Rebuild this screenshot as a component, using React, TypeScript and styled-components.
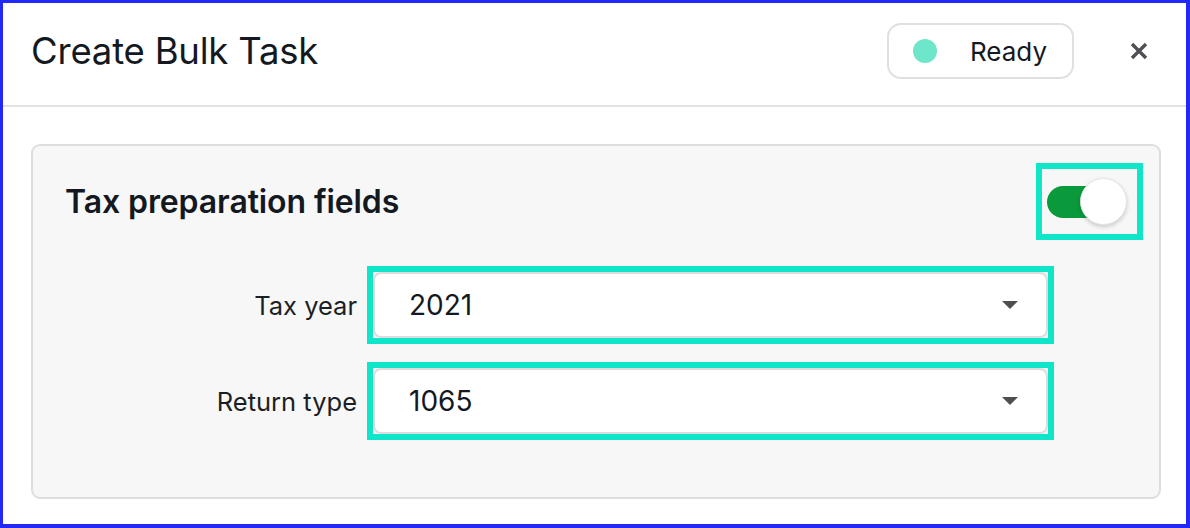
import { useState, Fragment } from "react"
import styled, { createGlobalStyle } from "styled-components"

const GlobalStyle = createGlobalStyle`
	html, body {
		margin: 0;
		padding: 0;
		background: #ffffff;
	}
	* {
		box-sizing: border-box;
	}
	body {
		font-family: Inter, "Noto Sans", "Liberation Sans", sans-serif;
		color: #14191f;
	}
`

const Frame = styled.div`
	width: 1190px;
	height: 528px;
	border-style: solid;
	border-color: #2228f5;
	border-width: 3px 4px 4px 3px;
	background: #ffffff;
	display: flex;
	flex-direction: column;
`

const Header = styled.header`
	height: 104px;
	flex-shrink: 0;
	display: flex;
	align-items: center;
	padding: 0 37px 6px 28px;
	border-bottom: 2px solid #e2e2e2;
`

const Title = styled.h1`
	margin: 0;
	flex: 1;
	font-size: 36.5px;
	font-weight: 400;
	letter-spacing: -0.2px;
	color: #14191f;
`

const StatusPill = styled.div`
	display: flex;
	align-items: center;
	height: 56px;
	padding: 0 25px 0 24px;
	border: 2px solid #e0e0e0;
	border-radius: 14px;
	gap: 33px;
	font-size: 26px;
	color: #14191f;
`

const Dot = styled.span<{ $color: string }>`
	width: 24px;
	height: 24px;
	border-radius: 50%;
	background: ${(p) => p.$color};
`

const CloseButton = styled.button`
	margin-left: 55px;
	width: 20px;
	height: 20px;
	padding: 0;
	border: none;
	background: transparent;
	display: flex;
	align-items: center;
	justify-content: center;
	cursor: pointer;
`

const Body = styled.main`
	flex: 1;
	padding: 37px 25px 25px 28px;
	display: flex;
`

const Panel = styled.section`
	flex: 1;
	background: #f7f7f7;
	border: 2px solid #dedede;
	border-radius: 9px;
	padding: 17px 16px 0 32px;
`

const PanelHeader = styled.div`
	display: flex;
	align-items: center;
	justify-content: space-between;
`

const PanelTitle = styled.h2`
	margin: 0;
	font-size: 32px;
	font-weight: 600;
	letter-spacing: -0.1px;
	color: #14191f;
`

const Highlight = styled.div`
	border: 6px solid #0fe5c9;
`

const ToggleBox = styled(Highlight)`
	width: 107px;
	height: 77px;
	display: flex;
	align-items: center;
	padding-left: 5px;
`

const Track = styled.button<{ $on: boolean }>`
	position: relative;
	width: 64px;
	height: 32px;
	border: none;
	padding: 0;
	border-radius: 16px;
	background: ${(p) => (p.$on ? "#0a9a3c" : "#c9c9c9")};
	cursor: pointer;
`

const Knob = styled.span<{ $on: boolean }>`
	position: absolute;
	top: 50%;
	left: ${(p) => (p.$on ? "33px" : "-4px")};
	width: 47px;
	height: 47px;
	margin-top: -23.5px;
	border-radius: 50%;
	background: #ffffff;
	border: 1px solid #e4e4e4;
	box-shadow: 0 2px 4px rgba(0, 0, 0, 0.18);
`

const Fields = styled.div`
	display: grid;
	grid-template-columns: 292px 687px;
	column-gap: 10px;
	row-gap: 18px;
	margin-top: 26px;
	align-items: center;
`

const Label = styled.label`
	text-align: right;
	font-size: 25.5px;
	color: #1b1f24;
`

const FieldBox = styled(Highlight)`
	height: 78px;
	display: flex;
`

const Select = styled.div`
	flex: 1;
	display: flex;
	align-items: center;
	justify-content: space-between;
	background: #ffffff;
	border: 2px solid #dcdcdc;
	border-radius: 8px;
	padding: 0 28px 0 34px;
	font-size: 28px;
	color: #14191f;
`

const Caret = styled.span`
	width: 0;
	height: 0;
	border-left: 8px solid transparent;
	border-right: 8px solid transparent;
	border-top: 8px solid #4d4f53;
`

const fields = [
	{ label: "Tax year", value: "2021" },
	{ label: "Return type", value: "1065" },
]

export default function App() {
	const [enabled, setEnabled] = useState(true)

	return (
		<>
			<GlobalStyle />
			<Frame>
				<Header>
					<Title>Create Bulk Task</Title>
					<StatusPill>
						<Dot $color="#6de6c9" />
						Ready
					</StatusPill>
					<CloseButton aria-label="Close">
						<svg width="20" height="20" viewBox="0 0 20 20">
							<path
								d="M3 3 L17 17 M17 3 L3 17"
								stroke="#4e5055"
								strokeWidth="3.4"
								strokeLinecap="butt"
							/>
						</svg>
					</CloseButton>
				</Header>
				<Body>
					<Panel>
						<PanelHeader>
							<PanelTitle>Tax preparation fields</PanelTitle>
							<ToggleBox>
								<Track $on={enabled} onClick={() => setEnabled(!enabled)}>
									<Knob $on={enabled} />
								</Track>
							</ToggleBox>
						</PanelHeader>
						<Fields>
							{fields.map((f) => (
								<Fragment key={f.label}>
									<Label>{f.label}</Label>
									<FieldBox>
										<Select>
											{f.value}
											<Caret />
										</Select>
									</FieldBox>
								</Fragment>
							))}
						</Fields>
					</Panel>
				</Body>
			</Frame>
		</>
	)
}
